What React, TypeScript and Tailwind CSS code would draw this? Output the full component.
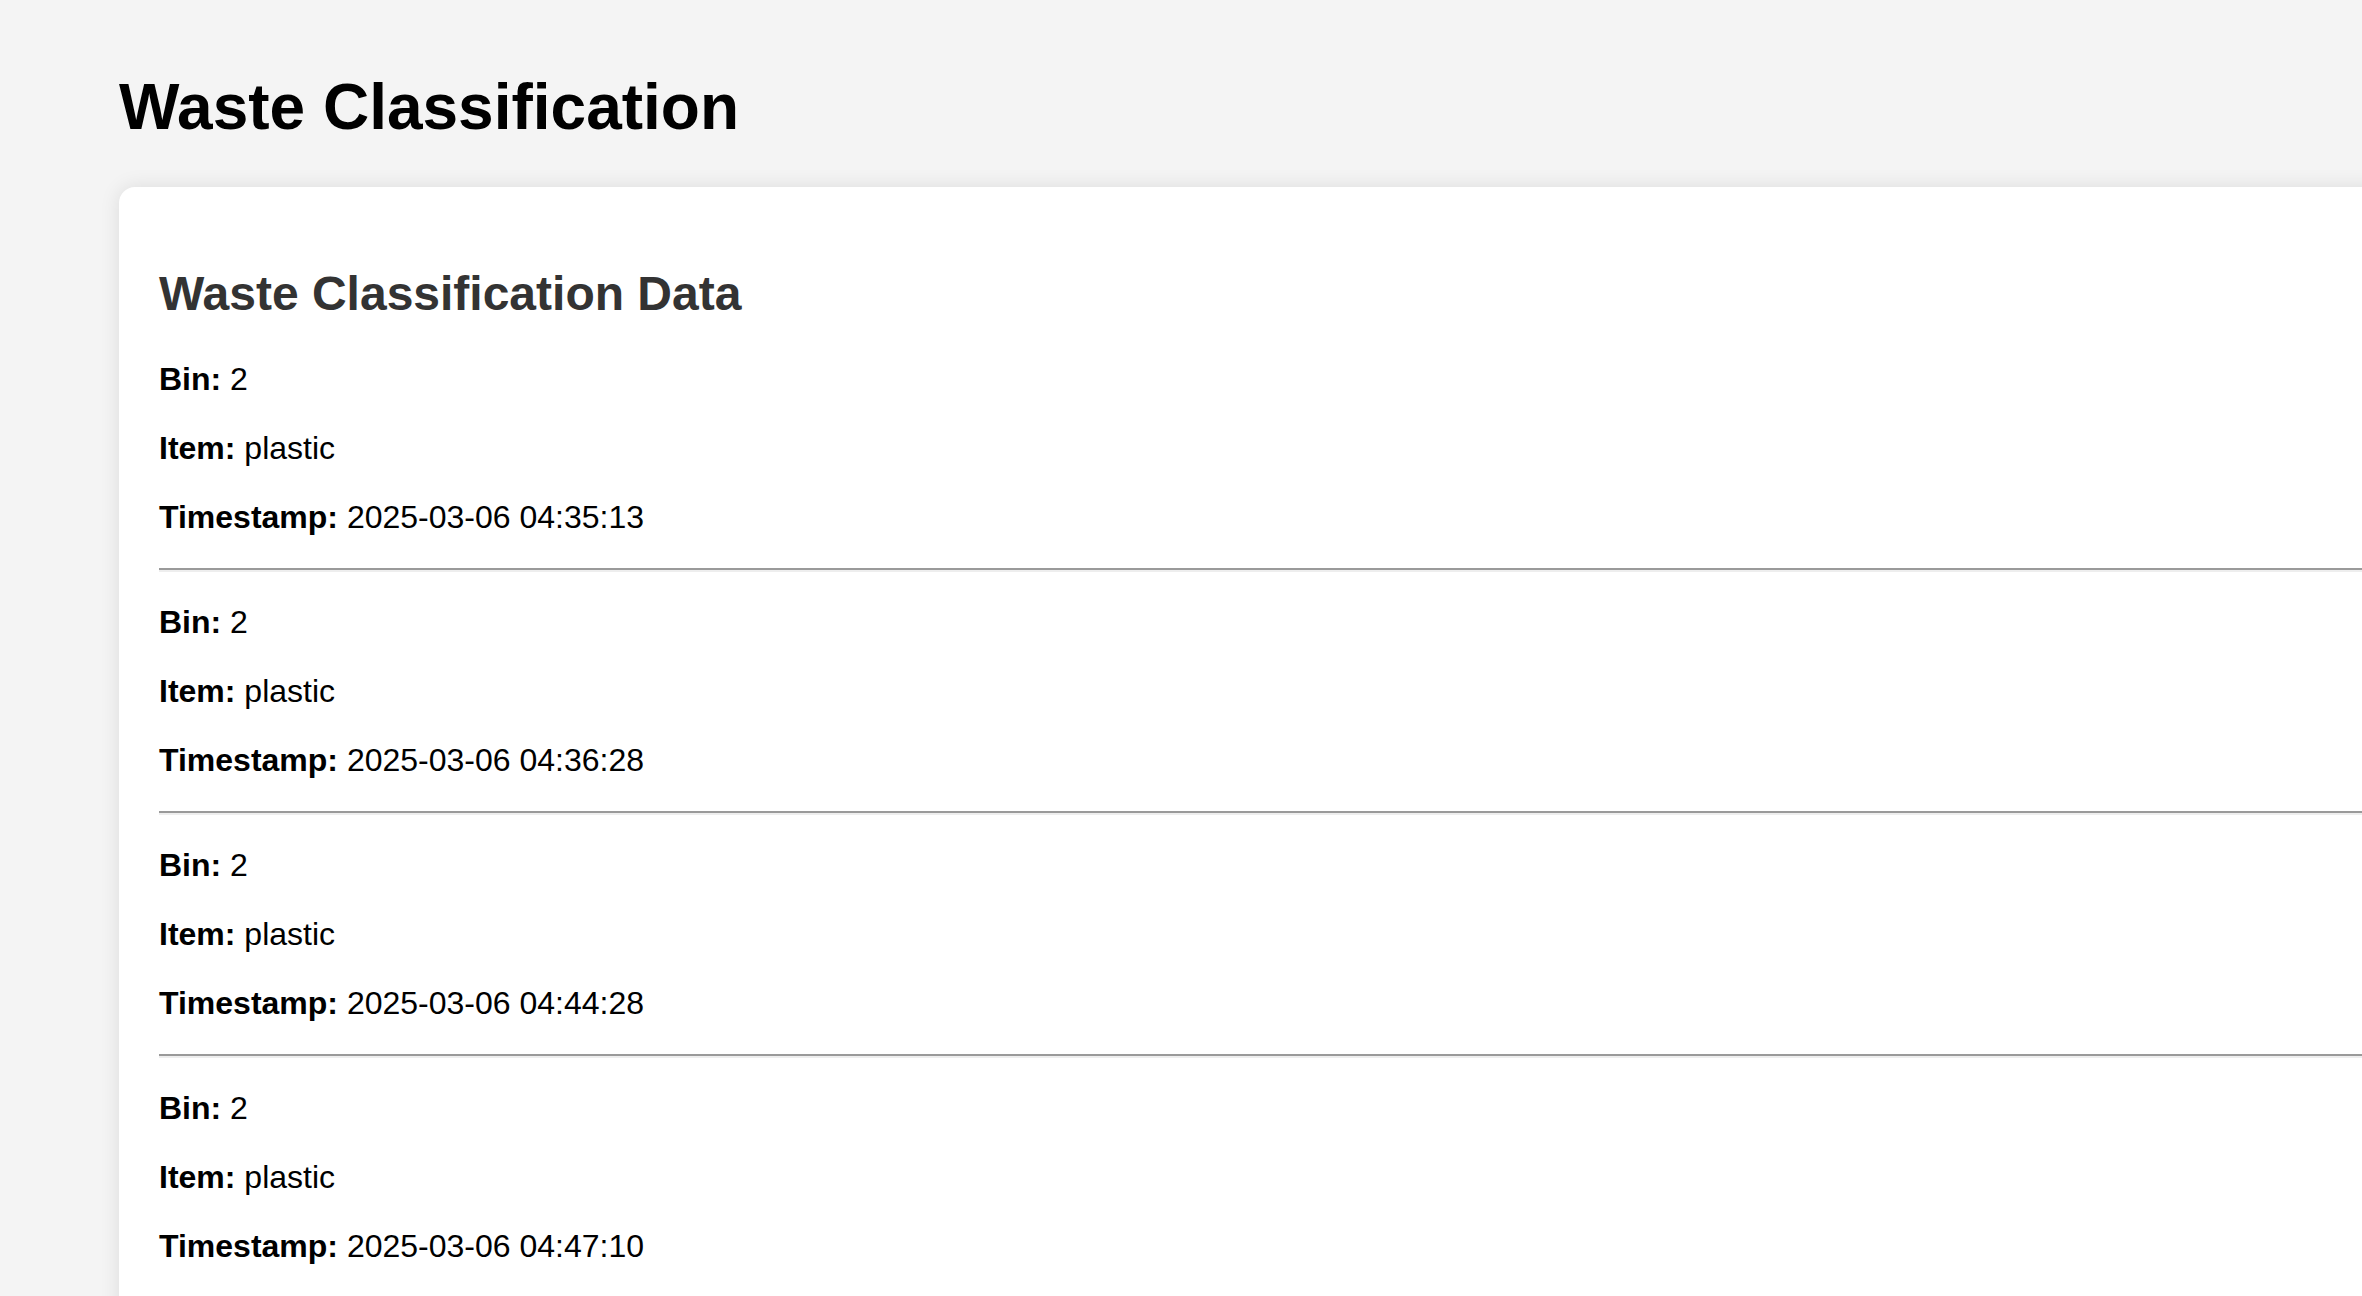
import React from "react";

const entries = [
  { bin: "2", item: "plastic", ts: "2025-03-06 04:35:13" },
  { bin: "2", item: "plastic", ts: "2025-03-06 04:36:28" },
  { bin: "2", item: "plastic", ts: "2025-03-06 04:44:28" },
  { bin: "2", item: "plastic", ts: "2025-03-06 04:47:10" },
];

export default function App() {
  return (
    <div className="h-[1296px] overflow-hidden bg-[#f4f4f4] pl-[119px] pt-[27px] font-['Liberation_Sans',Arial,sans-serif] text-black">
      <h1 className="my-[43px] text-[64px] font-bold leading-[74px] text-black">Waste Classification</h1>
      <div className="mr-[-120px] rounded-[16px] bg-white p-[40px] shadow-[0_0_20px_rgba(0,0,0,0.1)]">
        <h2 className="mt-[39px] mb-[40px] text-[48px] font-bold leading-[55px] text-[#333333]">
          Waste Classification Data
        </h2>
        {entries.map((e, i) => (
          <div key={i}>
            <p className="my-[32px] text-[32px] leading-[37px]">
              <strong className="font-bold">Bin:</strong> {e.bin}
            </p>
            <p className="my-[32px] text-[32px] leading-[37px]">
              <strong className="font-bold">Item:</strong> {e.item}
            </p>
            <p className="my-[32px] text-[32px] leading-[37px]">
              <strong className="font-bold">Timestamp:</strong> {e.ts}
            </p>
            <hr className="my-[16px] h-0 border-x-0 border-t-2 border-b-2 border-solid border-t-[#9a9a9a] border-b-[#eeeeee]" />
          </div>
        ))}
      </div>
    </div>
  );
}
